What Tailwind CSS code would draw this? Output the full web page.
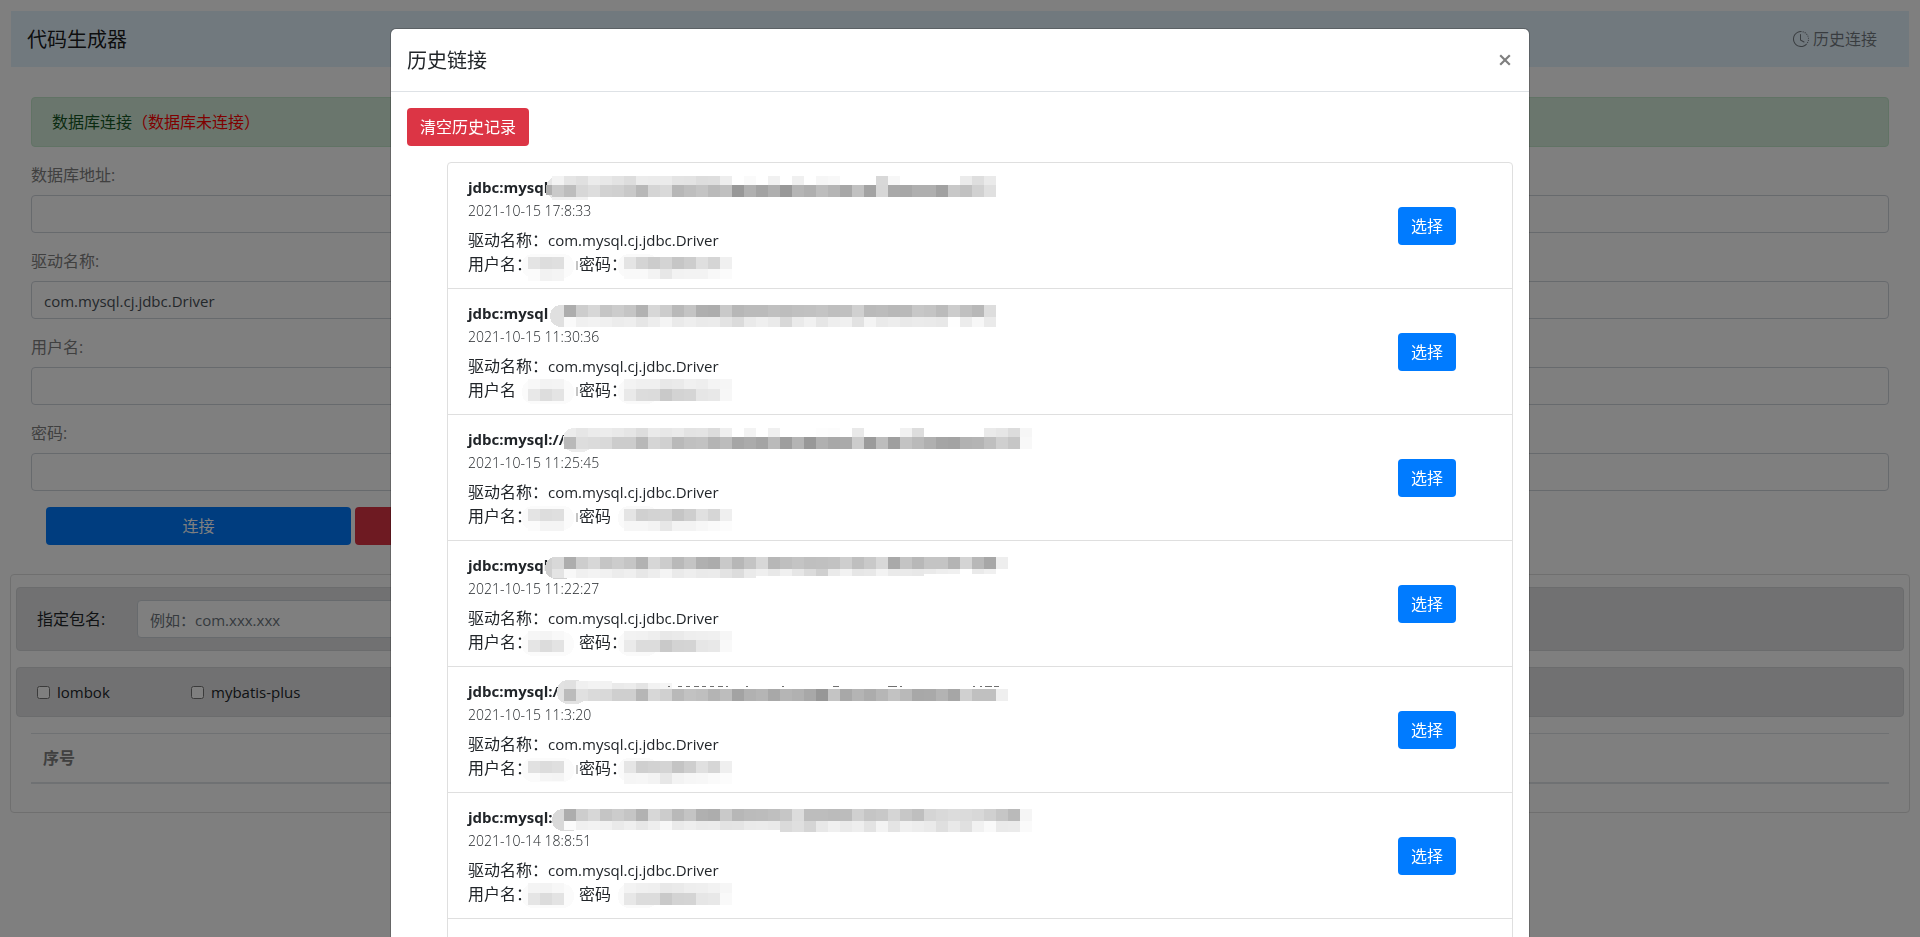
<!DOCTYPE html>
<html lang="zh-CN">
<head>
<meta charset="utf-8">
<meta name="viewport" content="width=device-width, initial-scale=1">
<title>代码生成器</title>
<script src="https://cdn.jsdelivr.net/npm/@tailwindcss/browser@4"></script>
</head>
<body class="h-screen overflow-hidden bg-white p-[11px] font-['Open_Sans','Noto_Sans_CJK_SC',sans-serif] text-base leading-6 text-[#212529]">

<nav class="flex h-14 items-center justify-between bg-[#e3f2fd] pl-4 pr-8">
  <h1 class="pt-0.5 text-xl leading-[30px] text-black/90">代码生成器</h1>
  <a href="#" class="flex items-center gap-1 text-black/50">
    <svg class="size-4" viewBox="0 0 16 16" fill="currentColor" aria-hidden="true">
      <path d="M8.515 1.019A7 7 0 0 0 8 1V0a8 8 0 0 1 .589.022l-.074.997zm2.004.45a7.003 7.003 0 0 0-.985-.299l.219-.976c.383.086.76.2 1.126.342l-.36.933zm1.37.71a7.01 7.01 0 0 0-.439-.27l.493-.87a8.025 8.025 0 0 1 .979.654l-.615.789a6.996 6.996 0 0 0-.418-.302zm1.834 1.79a6.99 6.99 0 0 0-.653-.796l.724-.69c.27.285.52.59.747.91l-.818.576zm.744 1.352a7.08 7.08 0 0 0-.214-.468l.893-.45a7.976 7.976 0 0 1 .45 1.088l-.95.313a7.023 7.023 0 0 0-.179-.483zm.53 2.507a6.991 6.991 0 0 0-.1-1.025l.985-.17c.067.386.106.778.116 1.17l-1 .025zm-.131 1.538c.033-.17.06-.339.081-.51l.993.123a7.957 7.957 0 0 1-.23 1.155l-.964-.267c.046-.165.086-.332.12-.501zm-.952 2.379c.184-.29.346-.594.486-.908l.914.405c-.16.36-.345.706-.555 1.038l-.845-.535zm-.964 1.205c.122-.122.239-.248.35-.378l.758.653a8.073 8.073 0 0 1-.401.432l-.707-.707z"/>
      <path d="M8 1a7 7 0 1 0 4.95 11.95l.707.707A8.001 8.001 0 1 1 8 0v1z"/>
      <path d="M7.5 3a.5.5 0 0 1 .5.5v5.21l3.248 1.856a.5.5 0 0 1-.496.868l-3.5-2A.5.5 0 0 1 7 9V3.5a.5.5 0 0 1 .5-.5z"/>
    </svg>
    历史连接
  </a>
</nav>

<form class="px-5 pt-[30px]">
  <div class="mb-4 rounded border border-[#c3e6cb] bg-[#d4edda] px-5 py-3 text-[#155724]">数据库连接<span class="text-[#ff0000]">（数据库未连接）</span></div>
  <div class="mb-4">
    <label for="url" class="mb-2 block text-[#808080]">数据库地址:</label>
    <input id="url" type="text" class="block h-[38px] w-full rounded border border-[#ced4da] px-3 pt-0.5 text-[15px] text-[#495057]">
  </div>
  <div class="mb-4">
    <label for="driver" class="mb-2 block text-[#808080]">驱动名称:</label>
    <input id="driver" type="text" value="com.mysql.cj.jdbc.Driver" class="block h-[38px] w-full rounded border border-[#ced4da] px-3 pt-0.5 text-[15px] text-[#495057]">
  </div>
  <div class="mb-4">
    <label for="user" class="mb-2 block text-[#808080]">用户名:</label>
    <input id="user" type="text" class="block h-[38px] w-full rounded border border-[#ced4da] px-3 pt-0.5 text-[15px] text-[#495057]">
  </div>
  <div class="mb-4">
    <label for="pass" class="mb-2 block text-[#808080]">密码:</label>
    <input id="pass" type="password" class="block h-[38px] w-full rounded border border-[#ced4da] px-3 pt-0.5 text-[15px] text-[#495057]">
  </div>
  <div class="flex gap-1 pl-[15px]">
    <button type="button" class="h-[38px] w-[305px] rounded bg-[#007bff] text-white">连接</button>
    <button type="button" aria-label="断开" class="h-[38px] w-[305px] rounded bg-[#dc3545]"></button>
  </div>
</form>

<section class="-mx-px mt-[29px] rounded border border-[#dfdfdf] px-[5px] pb-7 pt-3">
  <div class="mb-4 flex items-center rounded border border-[#d6d8db] bg-[#e2e3e5] px-5 py-3">
    <label for="pkg" class="w-[100px]">指定包名:</label>
    <input id="pkg" type="text" placeholder="例如：com.xxx.xxx" class="block h-[38px] w-1/4 rounded border border-[#ced4da] bg-white px-3 pt-0.5 text-[15px] placeholder:text-[#6c757d]">
  </div>
  <div class="mb-4 flex rounded border border-[#d6d8db] bg-[#e2e3e5] px-5 py-3 text-[15px]">
    <label class="flex w-[154px] items-center gap-[7px]"><input type="checkbox" class="size-[13px]">lombok</label>
    <label class="flex items-center gap-[7px]"><input type="checkbox" class="size-[13px]">mybatis-plus</label>
  </div>
  <div class="px-[15px]">
    <table class="w-full border-t border-[#dee2e6] text-[#808080]">
      <thead><tr class="border-b-2 border-[#dee2e6]"><th class="p-3 text-left font-bold">序号</th></tr></thead>
    </table>
  </div>
</section>

<div class="fixed inset-0 bg-black/50"></div>
<div class="fixed inset-0 overflow-hidden px-4 pt-7">
  <div role="dialog" aria-labelledby="dlg-title" class="mx-auto max-w-[1140px] rounded-md border border-black/20 bg-white bg-clip-padding">
    <div class="flex items-center justify-between border-b border-[#dee2e6] p-4">
      <h2 id="dlg-title" class="h-[30px] pt-px text-xl leading-[30px]">历史链接</h2>
      <button type="button" aria-label="关闭" class="flex size-4 items-center justify-center text-black/50">
        <svg class="size-3" viewBox="0 0 12 12" fill="none" stroke="currentColor" stroke-width="2.2" aria-hidden="true"><path d="M1.2 1.2 10.8 10.8M10.8 1.2 1.2 10.8"/></svg>
      </button>
    </div>
    <div class="p-4">
      <button type="button" class="block h-[38px] rounded bg-[#dc3545] px-[13px] text-white">清空历史记录</button>
      <ul id="history" class="ml-10 mt-4 rounded border border-[#dfdfdf]"></ul>
    </div>
  </div>
</div>

<template id="row">
  <li class="relative flex items-center justify-between border-b border-[#dfdfdf] py-3 pl-5 pr-14">
    <div>
      <div data-f="url" class="h-6 text-[15px] font-bold"></div>
      <div data-f="time" class="h-6 text-sm leading-6 font-light"></div>
      <div class="mt-[5px] h-6">驱动名称：<span class="text-[15px]">com.mysql.cj.jdbc.Driver</span></div>
      <div class="flex h-6"><span data-f="user" class="w-[111px]"></span><span data-f="pass"></span></div>
    </div>
    <svg class="pointer-events-none absolute left-0 top-0 h-full w-full" shape-rendering="crispEdges" aria-hidden="true"></svg>
    <button type="button" class="h-[38px] rounded bg-[#007bff] px-[13px] text-white">选择</button>
  </li>
</template>

<script>
// Each mask row: [x, y, height, grey levels of 12px cells ("--" leaves a gap)]
const rows = [
  { url: 'jdbc:mysql', time: '2021-10-15 17:8:33', user: '用户名：', pass: '密码：', lead: [99, 13, 24, 'e6'], arc: 1,
    cells: [
      [104, 13, 9, 'f3 e5 e0 eb e8 e3 dd ec eb eb e4 e3 dd de ee -- fa -- f1 -- f0 -- f6 f8 -- -- -- d8 f7 -- -- -- -- -- eb de ea'],
      [98, 22, 10, 'b0'],
      [104, 22, 12, 'c9 bd d7 dd d2 d0 c9 b8 d5 d9 b7 be c4 ba c0 98 b0 a3 af 98 b5 af bd b5 a7 c1 a3 d7 a9 a7 af af a1 c8 c1 d1 e0'],
      [104, 34, 3, 'f0 f1 f2'],
      [80, 94, 12, 'e4 dd df'], [80, 106, 12, 'fb f2 f4'],
      [176, 94, 12, 'e4 d4 cc d4 c6 cd df d5 f0'], [176, 106, 10, 'f9 f9 f3 e7 f2 f3 f3 f8 fb']] },
  { url: 'jdbc:mysql', time: '2021-10-15 11:30:36', user: '用户名', pass: '密码：', lead: [102, 16, 22, 'e0'], arc: 1,
    cells: [
      [116, 16, 12, 'ad cd d7 c5 cc c5 b2 d7 cc b9 c4 af ad c9 b7 bb bb c0 bd c0 c1 c4 bf c0 d0 ba bc b8 b9 c7 c4 bb cc c0 b8 dd'],
      [116, 28, 10, 'fa f0 f2 f0 ec ee e6 ed f4 ea ee ea eb e3 db ea ef ea d8 ea f1 e6 ee f0 e2 f4 ea ed e9 eb ea e8 fe ec f7 ea'],
      [80, 90, 10, 'f8 f3 f4'], [80, 100, 12, 'e8 dd e4'],
      [176, 90, 10, 'f3 f0 f0 e8 ea f0 ee f4 f6'], [176, 100, 12, 'e9 dc db c9 d3 d5 e6 e8 f7']] },
  { url: 'jdbc:mysql://', time: '2021-10-15 11:25:45', user: '用户名：', pass: '密码', lead: [115, 13, 24, 'ec'], arc: 1,
    cells: [
      [128, 13, 9, 'e6 eb ec e9 e5 dd ea e7 ea e3 e4 dc ef -- f3 -- f0 -- -- -- fd fc -- e9 -- -- -- f1 dd -- -- -- -- -- ea e6 dc f6'],
      [116, 22, 12, 'b9'],
      [128, 22, 12, 'dd db d9 cc cc b8 d5 d0 b9 c0 c2 b4 bc a6 ab a4 ba 9e b4 98 b0 a8 aa cc 9b bd 9f c3 ba b0 a5 a3 b2 b4 bf cf c6 f8'],
      [80, 94, 12, 'e4 dd df'], [80, 106, 10, 'fb f4 f4'],
      [176, 94, 12, 'e4 d0 d3 d4 c5 ce e0 d6 ef'], [176, 106, 10, 'f6 f6 f3 e7 f3 f3 f7 fa fc']] },
  { url: 'jdbc:mysql', time: '2021-10-15 11:22:27', user: '用户名：', pass: '密码：', lead: [97, 16, 22, 'd0'],
    cells: [
      [104, 16, 12, 'd8 ad cd d7 c5 cc c5 b2 d7 cc b9 c4 b0 ac c9 b7 c4 d7 b7 bf c4 bf c0 c2 ce bf c9 d8 a9 c4 b8 c4 c4 b4 d4 b8 a7 ee'],
      [104, 28, 9, 'e4 f8 f0 f3 f1 ec ef e7 ed f4 ea ee ea eb e3 dc ea'], [308, 28, 7, 'ef e8 f0 e6 db cf ea f2 e6 e8 f3 ea ea e8'], [476, 28, 5, 'ea ee f0 -- ea f0'],
      [80, 90, 9, 'f6 f4 f8'], [80, 99, 12, 'e5 dc e3'],
      [176, 90, 9, 'f2 f1 ee e8 ea ee ef f0 f6'], [176, 99, 12, 'ea dc dc c9 d3 d4 e6 e8 f9']] },
  { url: 'jdbc:mysql:/', time: '2021-10-15 11:3:20', user: '用户名：', pass: '密码：', lead: [109, 13, 24, 'e2'], arc: 1, tips: 1,
    cells: [
      [116, 14, 8, 'e0 f0 f3 f2'], [164, 16, 6, 'ea ec e4 f2 f5'],
      [116, 22, 12, 'bb e0 da d9 cf cf b6 d7 d0 b9 c2 bf b4 bd a3 b1 b5 a8 b5 b1 a8 97 c4 a8 b4 ac b6 c2 b9 a8 a9 b3 a6 d0 c0 c0 ef'],
      [80, 94, 12, 'e1 dc df'], [80, 106, 8, 'fb f5 f4'],
      [176, 94, 12, 'e5 cf d2 d4 c4 ce e0 d6 ef'], [176, 106, 11, 'f5 f6 f3 e7 f3 f6 f7 fa fc']] },
  { url: 'jdbc:mysql:', time: '2021-10-14 18:8:51', user: '用户名：', pass: '密码', lead: [104, 16, 22, 'd9'],
    cells: [
      [116, 16, 12, 'ad cd d7 c5 cc c5 b2 d7 cc b9 c4 b0 ad c9 b7 bb bc bf c6 dc bd bd bb bc d0 c5 c8 d5 c7 bf d5 d9 dc db d8 d0 c6 ba f5'],
      [116, 28, 9, 'fb f0 f2 f1 ea ef e7 ee f7 ea ee ea eb e3 e4 ea eb e9'], [332, 28, 11, 'da df d5 e8 f0 ea ee e3 f3 e4 f0 ed ea df e9 e0 f1 f9 ea eb fa'],
      [80, 90, 10, 'f4 f3 f7'], [80, 100, 12, 'e5 dc e3'],
      [176, 90, 10, 'f3 f0 ef e8 ea ee ef f2 f6'], [176, 100, 12, 'e7 dc dc c9 d3 d4 e6 e8 f9']] }
];
const rect = (x, y, w, h, g, r) => `<rect x="${x}" y="${y}" width="${w}" height="${h}" rx="${r || 0}" fill="#${g}${g}${g}"/>`;
const list = document.getElementById('history');
const tpl = document.getElementById('row');
rows.forEach(d => {
  const li = tpl.content.cloneNode(true);
  for (const f of ['url', 'time', 'user', 'pass']) li.querySelector(`[data-f=${f}]`).textContent = d[f];
  const [lx, ly, lh, lg] = d.lead;
  let s = rect(lx, ly, 30, lh, lg, 11) + rect(74, 91, 52, 24, 'fb', 11) + rect(170, 91, 40, 24, 'fa', 11);
  if (d.arc) s += rect(128, 98, 2, 9, 'c4', 0);
  d.cells.forEach(([x, y, h, levels]) => levels.split(' ').forEach((g, i) => {
    if (g !== '--') s += rect(x + i * 12, y, 12, h, g);
  }));
  // Tops of the masked glyphs that show above the mask
  if (d.tips) [[220, 2], [230, 4], [238, 4], [246, 5], [254, 4], [262, 4], [270, 5], [278, 2], [298, 2], [334, 2], [385, 6], [440, 9], [452, 2], [525, 2], [532, 2], [537, 7], [546, 5]]
    .forEach(([x, w]) => s += rect(x, 19, w, 1, '70'));
  li.querySelector('svg').innerHTML = s;
  list.append(li);
});
const next = document.createElement('li');
next.className = 'h-[125px]';
list.append(next);
</script>
</body>
</html>
